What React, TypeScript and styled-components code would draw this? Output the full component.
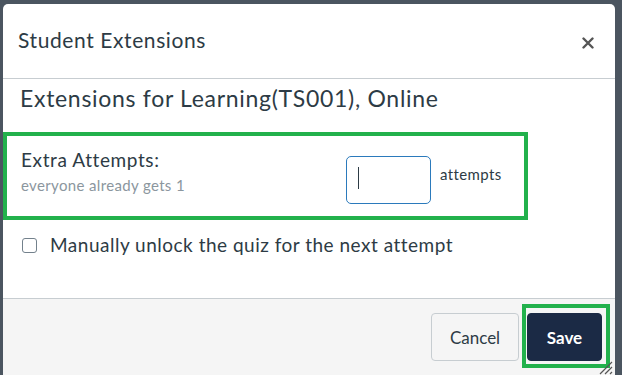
import styled, { createGlobalStyle } from 'styled-components';

const GlobalStyle = createGlobalStyle`
  html, body {
    margin: 0;
    padding: 0;
    background: #4b5560;
    font-family: Lato, "Open Sans", "Liberation Sans", sans-serif;
    color: #2d3b45;
  }
  #root {
    height: 375px;
    overflow: hidden;
    padding: 4px 7px 0 3px;
    box-sizing: border-box;
  }
`;

const Dialog = styled.div`
  position: relative;
  width: 612px;
  height: 371px;
  background: #fff;
  border-radius: 5px 5px 0 0;
  display: flex;
  flex-direction: column;
  overflow: hidden;
`;

const Header = styled.div`
  display: flex;
  align-items: center;
  justify-content: space-between;
  height: 74px;
  padding: 0 20px 0 15px;
  border-bottom: 1px solid #c7cdd1;
  flex-shrink: 0;
`;

const Title = styled.h2`
  margin: -3px 0 0;
  font-size: 21px;
  letter-spacing: 0.6px;
  font-weight: 400;
  line-height: 24px;
`;

const CloseButton = styled.button`
  display: flex;
  align-items: center;
  justify-content: center;
  width: 14px;
  height: 14px;
  margin-top: 3px;
  padding: 0;
  border: none;
  background: none;
  color: #555;
  cursor: pointer;
`;

const Body = styled.div`
  height: 219px;
  padding-top: 5px;
  box-sizing: border-box;
  flex-shrink: 0;
`;

const Heading = styled.h3`
  margin: 0 0 20px;
  padding-left: 17px;
  font-size: 23px;
  letter-spacing: 0.7px;
  font-weight: 400;
  line-height: 28px;
`;

const Highlight = styled.div`
  display: flex;
  align-items: flex-start;
  width: 525px;
  height: 88px;
  box-sizing: border-box;
  border: 4px solid #22b14c;
  padding: 13px 0 0 14px;
`;

const LabelColumn = styled.div`
  width: 325px;
  display: flex;
  flex-direction: column;
  gap: 5px;
`;

const FieldLabel = styled.div`
  font-size: 19px;
  letter-spacing: 0.6px;
  line-height: 22px;
`;

const Hint = styled.div`
  font-size: 15px;
  letter-spacing: 0.35px;
  line-height: 18px;
  color: #8b969e;
`;

const NumberBox = styled.div`
  position: relative;
  width: 85px;
  height: 48px;
  margin-top: 7px;
  box-sizing: border-box;
  border: 1px solid #2b7abc;
  border-radius: 5px;
`;

const Caret = styled.span`
  position: absolute;
  left: 11px;
  top: 10px;
  width: 1px;
  height: 22px;
  background: #2d3b45;
`;

const Unit = styled.span`
  margin: 16px 0 0 9px;
  font-size: 15px;
  letter-spacing: 0.4px;
  line-height: 18px;
`;

const CheckRow = styled.label`
  display: flex;
  align-items: center;
  gap: 13px;
  margin-top: 13px;
  padding-left: 19px;
  font-size: 19px;
  letter-spacing: 0.5px;
  line-height: 24px;
`;

const Box = styled.span`
  width: 15px;
  height: 15px;
  box-sizing: border-box;
  border: 1px solid #73818c;
  border-radius: 3px;
  background: #fff;
`;

const Footer = styled.div`
  flex: 1;
  display: flex;
  justify-content: flex-end;
  align-items: flex-start;
  gap: 3px;
  padding: 5px 5px 0 0;
  background: #f5f5f5;
  border-top: 1px solid #c7cdd1;
`;

const Button = styled.button<{ $primary?: boolean }>`
  height: 48px;
  padding: 0;
  box-sizing: border-box;
  border-radius: 4px;
  font-family: inherit;
  font-size: 17px;
  cursor: pointer;
  width: ${(p) => (p.$primary ? '75px' : '88px')};
  margin-top: ${(p) => (p.$primary ? '0' : '9px')};
  font-weight: ${(p) => (p.$primary ? 700 : 400)};
  color: ${(p) => (p.$primary ? '#fff' : '#2d3b45')};
  background: ${(p) => (p.$primary ? '#1b2a45' : '#f5f5f5')};
  border: 1px solid ${(p) => (p.$primary ? '#1b2a45' : '#c7cdd1')};
`;

const SaveFrame = styled.div`
  display: flex;
  border: 4px solid #22b14c;
  padding: 5px 4px 3px 1px;
`;

const Grip = styled.svg`
  position: absolute;
  right: 2px;
  bottom: 0;
`;

export default function App() {
  return (
    <>
      <GlobalStyle />
      <Dialog>
        <Header>
          <Title>Student Extensions</Title>
          <CloseButton aria-label="Close">
            <svg width="12" height="12" viewBox="0 0 12 12">
              <path d="M1.5 1.5l9 9M10.5 1.5l-9 9" stroke="currentColor" strokeWidth="2.4" strokeLinecap="round" />
            </svg>
          </CloseButton>
        </Header>
        <Body>
          <Heading>Extensions for Learning(TS001), Online</Heading>
          <Highlight>
            <LabelColumn>
              <FieldLabel>Extra Attempts:</FieldLabel>
              <Hint>everyone already gets 1</Hint>
            </LabelColumn>
            <NumberBox>
              <Caret />
            </NumberBox>
            <Unit>attempts</Unit>
          </Highlight>
          <CheckRow>
            <Box />
            Manually unlock the quiz for the next attempt
          </CheckRow>
        </Body>
        <Footer>
          <Button>Cancel</Button>
          <SaveFrame>
            <Button $primary>Save</Button>
          </SaveFrame>
        </Footer>
        <Grip width="16" height="16" viewBox="0 0 16 16">
          <path d="M15 3L3 15M15 8L8 15M15 13L13 15" stroke="#555" strokeWidth="1.2" />
        </Grip>
      </Dialog>
    </>
  );
}
